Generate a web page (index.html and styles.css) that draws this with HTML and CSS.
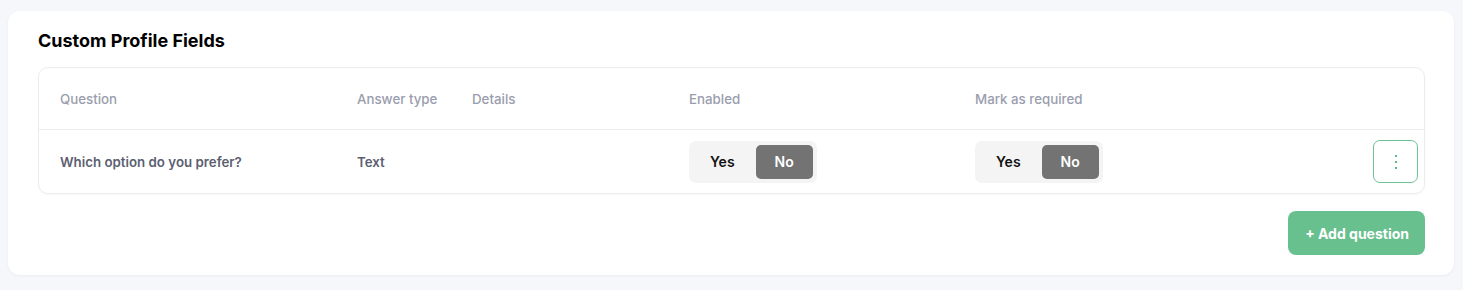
FILE: index.html
```html
<!DOCTYPE html>
<html lang="en">
<head>
  <meta charset="UTF-8">
  <meta name="viewport" content="width=device-width, initial-scale=1.0">
  <title>custom profile fields</title>
  <link rel="stylesheet" href="styles.css">
</head>
<body>

  <!-- Fields Card -->
  <div class="card">
    <h2 class="card-title">Custom Profile Fields</h2>

    <div class="fields-table">
      <div class="row head">
        <div>Question</div>
        <div>Answer type</div>
        <div>Details</div>
        <div>Enabled</div>
        <div>Mark as required</div>
        <div></div>
      </div>
      <div class="row body-row">
        <div>Which option do you prefer?</div>
        <div>Text</div>
        <div></div>
        <div>
          <div class="toggle">
            <span class="opt">Yes</span>
            <span class="opt active">No</span>
          </div>
        </div>
        <div>
          <div class="toggle">
            <span class="opt">Yes</span>
            <span class="opt active">No</span>
          </div>
        </div>
        <div>
          <button class="menu-btn" aria-label="More">
            <svg width="4" height="14" viewBox="0 0 4 14">
              <rect x="1" y="0" width="2" height="2" fill="#5cba84"/>
              <rect x="1" y="6" width="2" height="2" fill="#5cba84"/>
              <rect x="1" y="12" width="2" height="2" fill="#5cba84"/>
            </svg>
          </button>
        </div>
      </div>
    </div>

    <div class="actions">
      <button class="add-btn">+ Add question</button>
    </div>
  </div>

</body>
</html>
```

FILE: styles.css
```css
body {
  margin: 0;
  padding: 11px 9px 15px 8px;
  font-family: 'Inter', 'Noto Sans', sans-serif;
  background: #f6f7fb;
  color: #000;
}

/* Card */
.card {
  background: #fff;
  border-radius: 12px;
  box-shadow: 0 1px 3px rgba(20, 30, 60, 0.05);
  padding: 19px 29px 20px 30px;
}
.card-title {
  margin: 0 0 15px;
  font-size: 18px;
  line-height: 22px;
  font-weight: 700;
  color: #000;
}

/* Table */
.fields-table {
  border: 1px solid #ececef;
  border-radius: 10px;
  box-shadow: 0 1px 2px rgba(20, 30, 60, 0.04);
}
.row {
  display: grid;
  grid-template-columns: 297px 115px 217px 286px 1fr auto;
  align-items: center;
  padding: 0 6px 0 21px;
  font-size: 13.3px;
}
.row.head {
  height: 61px;
  border-bottom: 1px solid #ececef;
  color: #9a9dad;
  font-weight: 500;
}
.row.body-row {
  height: 63px;
  color: #5c5f71;
  font-weight: 600;
}

/* Yes / No toggle */
.toggle {
  display: inline-flex;
  background: #f4f4f5;
  border-radius: 7px;
  padding: 4px;
}
.toggle .opt {
  height: 34px;
  line-height: 34px;
  padding: 0 19px;
  font-size: 14px;
  font-weight: 600;
  color: #111;
  border-radius: 5px;
}
.toggle .opt:first-child {
  padding: 0 21px 0 17px;
}
.toggle .opt.active {
  background: #737373;
  color: #fff;
}

.menu-btn {
  width: 45px;
  height: 43px;
  border: 1px solid #6cc393;
  border-radius: 7px;
  background: #fff;
  display: flex;
  align-items: center;
  justify-content: center;
  padding: 0;
  cursor: pointer;
}

/* Footer */
.actions {
  display: flex;
  justify-content: flex-end;
  margin-top: 17px;
}
.add-btn {
  height: 44px;
  padding: 0 16px 0 17px;
  border: none;
  border-radius: 8px;
  background: #68c08e;
  color: #fff;
  font-family: inherit;
  font-size: 14px;
  font-weight: 700;
  cursor: pointer;
}
```
